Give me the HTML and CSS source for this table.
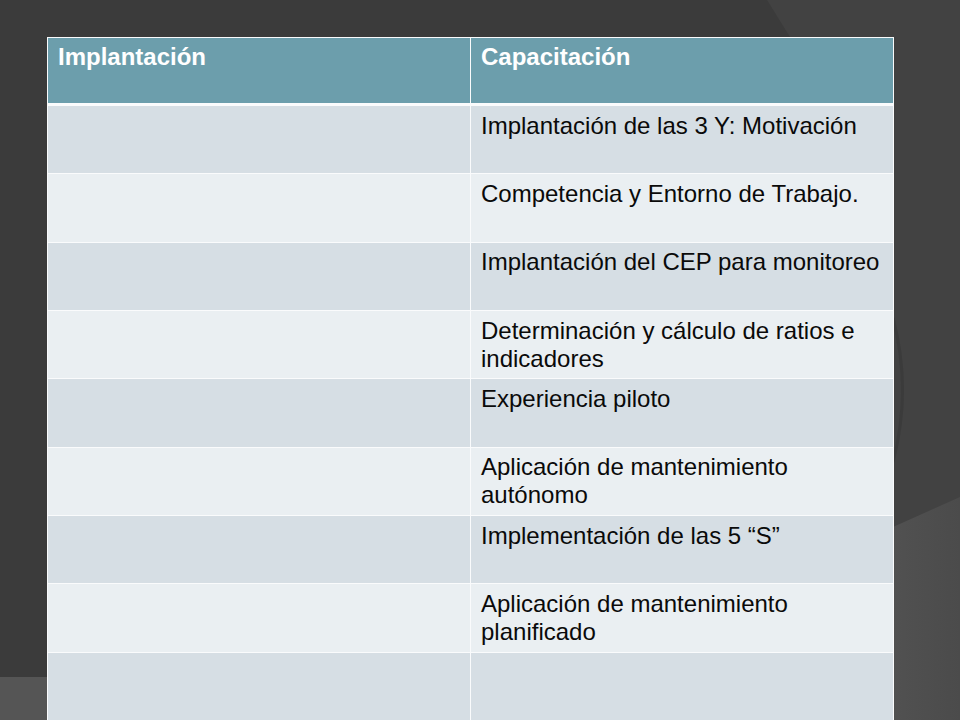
FILE: index.html
```
<!DOCTYPE html>
<html lang="es">
<head>
<meta charset="utf-8">
<title>Implantación y Capacitación</title>
<link rel="stylesheet" href="styles.css">
</head>
<body>
<svg class="backdrop" width="960" height="720" viewBox="0 0 960 720" aria-hidden="true">
  <defs>
    <linearGradient id="br" x1="0" y1="0" x2="1" y2="0">
      <stop offset="0" stop-color="#515151"/>
      <stop offset="1" stop-color="#4b4b4b"/>
    </linearGradient>
  </defs>
  <rect x="0" y="0" width="960" height="720" fill="#3b3b3b"/>
  <polygon points="767,0 960,0 960,720 893,720 893,203" fill="#424242"/>
  <polygon points="893,527 960,497 960,720 893,720" fill="url(#br)"/>
  <rect x="0" y="677" width="48" height="43" fill="#555555"/>
  <path d="M893 318 Q912 390 893 462" fill="none" stroke="#333333" stroke-width="3" opacity="0.45"/>
</svg>
<div class="grid-table">
  <div class="cell head">Implantación</div>
  <div class="cell head">Capacitación</div>

  <div class="cell dark"></div>
  <div class="cell dark">Implantación de las 3 Y: Motivación</div>

  <div class="cell light"></div>
  <div class="cell light">Competencia y Entorno de Trabajo.</div>

  <div class="cell dark"></div>
  <div class="cell dark">Implantación del CEP para monitoreo</div>

  <div class="cell light"></div>
  <div class="cell light">Determinación y cálculo de ratios e indicadores</div>

  <div class="cell dark"></div>
  <div class="cell dark">Experiencia piloto</div>

  <div class="cell light"></div>
  <div class="cell light">Aplicación de mantenimiento autónomo</div>

  <div class="cell dark"></div>
  <div class="cell dark">Implementación de las 5 “S”</div>

  <div class="cell light"></div>
  <div class="cell light">Aplicación de mantenimiento planificado</div>

  <div class="cell dark"></div>
  <div class="cell dark"></div>
</div>
</body>
</html>
```
FILE: styles.css
```
html {
  background: #3b3b3b;
}

body {
  margin: 0;
  width: 960px;
  height: 720px;
  overflow: hidden;
  position: relative;
  font-family: "Liberation Sans", Arial, sans-serif;
  font-size: 24px;
  line-height: 28px;
  color: #0a0a0a;
}

.backdrop {
  position: absolute;
  left: 0;
  top: 0;
  z-index: 0;
}

.grid-table {
  position: relative;
  z-index: 1;
  margin: 37px 0 0 47px;
  width: 847px;
  box-sizing: border-box;
  padding: 1px 1px 0 1px;
  background: #fafbfc;
  display: grid;
  grid-template-columns: 422px 422px;
  grid-template-rows: 67px repeat(9, 67.35px);
  gap: 1px;
}

.cell {
  box-sizing: border-box;
  padding: 5.5px 9px 0 10px;
}

.head {
  background: #6c9eac;
  color: #ffffff;
  font-weight: bold;
  border-bottom: 2px solid #fafbfc;
  padding-top: 5px;
}

.dark {
  background: #d6dee4;
}

.light {
  background: #eaeff2;
}
```
